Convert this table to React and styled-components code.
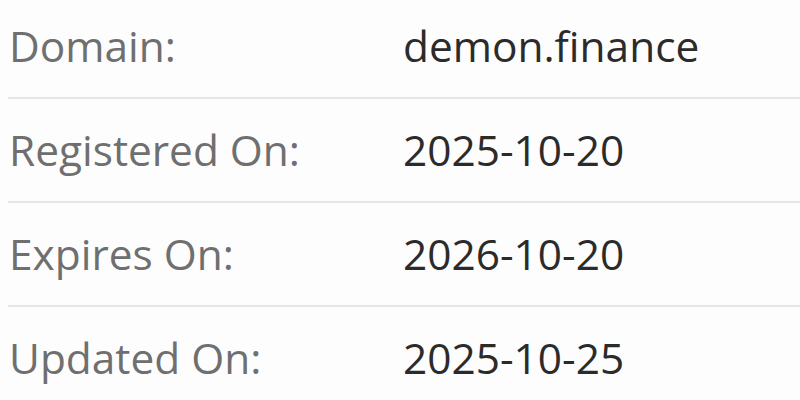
import React from "react";
import styled, { createGlobalStyle } from "styled-components";

const Global = createGlobalStyle`
  html, body { margin: 0; padding: 0; background: #fdfdfd; }
  body { font-family: "Open Sans", "Noto Sans", sans-serif; overflow: hidden; }
`;

const Table = styled.div`
  margin-left: 8px;
  width: 792px;
  display: flex;
  flex-direction: column;
`;

const Row = styled.div`
  display: grid;
  grid-template-columns: 395px 1fr;
  align-items: center;
  padding: ${(p) => (p.$first ? "17px" : "22px")} 0 22px;
  border-bottom: 2px solid #e6e6e6;
  font-size: 42.4px;
  line-height: 58px;
`;

const Label = styled.div`
  color: #6f6f6f;
  white-space: nowrap;
  padding-left: 1px;
`;

const Value = styled.div`
  color: #2b2b2b;
  white-space: nowrap;
`;

const rows = [
  ["Domain:", "demon.finance"],
  ["Registered On:", "2025-10-20"],
  ["Expires On:", "2026-10-20"],
  ["Updated On:", "2025-10-25"],
];

export default function App() {
  return (
    <>
      <Global />
      <Table>
        {rows.map(([l, v], i) => (
          <Row key={l} $first={i === 0}>
            <Label>{l}</Label>
            <Value>{v}</Value>
          </Row>
        ))}
      </Table>
    </>
  );
}
